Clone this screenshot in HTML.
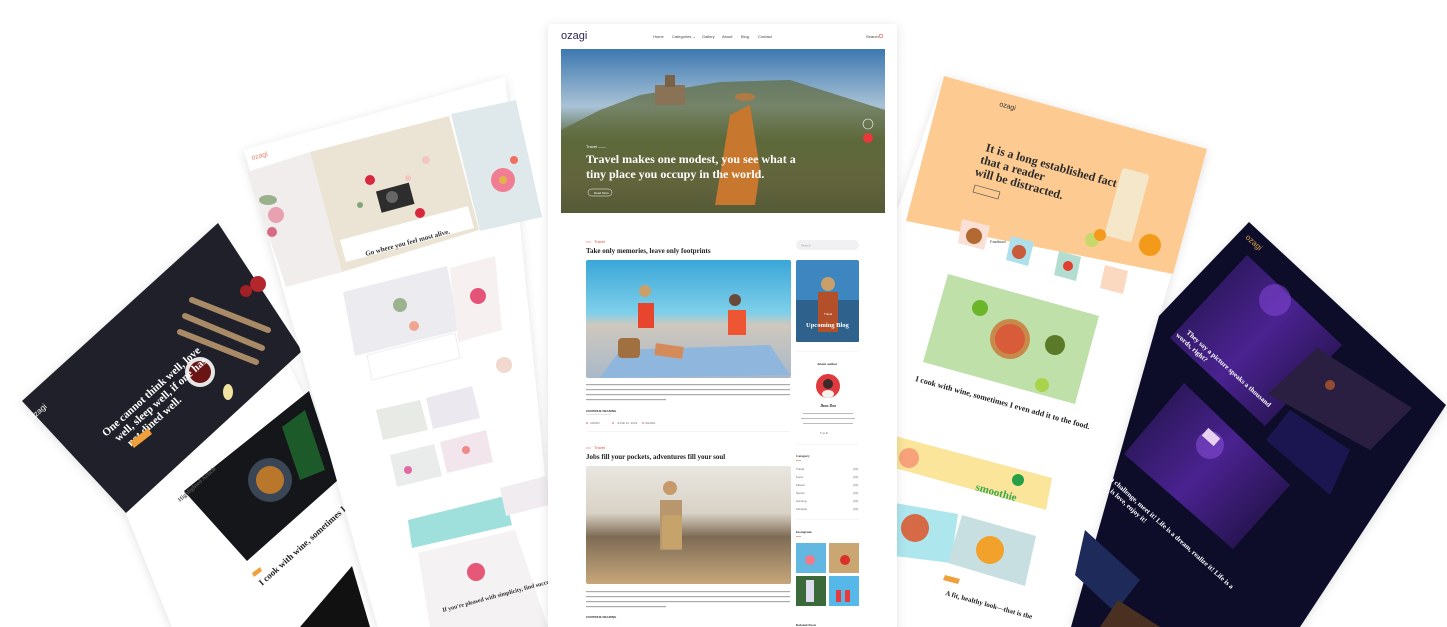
<!DOCTYPE html>
<html><head><meta charset="utf-8"><style>
html,body{margin:0;padding:0;background:#fff;width:1447px;height:627px;overflow:hidden}
svg{display:block}
.s{font-family:"Liberation Serif",serif;font-weight:bold}
.a{font-family:"Liberation Sans",sans-serif}
</style></head><body>
<svg width="1447" height="627" viewBox="0 0 1447 627" xmlns="http://www.w3.org/2000/svg">
<defs>
<filter id="sh" x="-10%" y="-10%" width="120%" height="120%"><feDropShadow dx="0" dy="2" stdDeviation="5" flood-color="#000" flood-opacity="0.12"/></filter>
<linearGradient id="hero" x1="0" y1="0" x2="0" y2="1"><stop offset="0" stop-color="#3d78b0"/><stop offset="0.35" stop-color="#a9c2d6"/><stop offset="0.55" stop-color="#5a6b3e"/><stop offset="0.8" stop-color="#6a5a40"/><stop offset="1" stop-color="#3b3630"/></linearGradient>
<linearGradient id="sea" x1="0" y1="0" x2="0" y2="1"><stop offset="0" stop-color="#3aa6d8"/><stop offset="0.45" stop-color="#7fd0ea"/><stop offset="0.55" stop-color="#cfc8bd"/><stop offset="1" stop-color="#a9b8c9"/></linearGradient>
<linearGradient id="dune" x1="0" y1="0" x2="0" y2="1"><stop offset="0" stop-color="#e9e6e1"/><stop offset="0.4" stop-color="#d9d2c6"/><stop offset="0.6" stop-color="#7e6b55"/><stop offset="1" stop-color="#c6a77a"/></linearGradient>
<linearGradient id="pur" x1="0" y1="0" x2="1" y2="1"><stop offset="0" stop-color="#1c1240"/><stop offset="0.5" stop-color="#4a2290"/><stop offset="1" stop-color="#160e34"/></linearGradient>
</defs>

<!-- LEFT dark food page -->
<g filter="url(#sh)">
<polygon points="22,401 218,223 420,627 172,627 126,513" fill="#fff"/>
</g>
<polygon points="22,401 218,223 302,351 126,513" fill="#1f2029"/>
<circle cx="258" cy="284" r="8" fill="#b3262b"/><circle cx="246" cy="291" r="6" fill="#a02025"/>
<g stroke="#a88a66" stroke-width="6" stroke-linecap="round"><line x1="192" y1="300" x2="268" y2="330"/><line x1="185" y1="316" x2="262" y2="348"/><line x1="180" y1="332" x2="256" y2="362"/></g>
<circle cx="200" cy="372" r="15" fill="#e6e6e6"/><circle cx="200" cy="372" r="11" fill="#6a1414"/>
<ellipse cx="228" cy="392" rx="5" ry="8" fill="#f0e2a0"/>
<g transform="translate(106,437) rotate(-42)"><text class="s" font-size="11" fill="#fff" x="0" y="0">One cannot think well, love</text><text class="s" font-size="11" fill="#fff" x="6" y="12">well, sleep well, if one has</text><text class="s" font-size="11" fill="#fff" x="12" y="24">not dined well.</text></g>
<polygon points="130,442 148,428 152,434 134,448" fill="#f0a03a"/>
<text class="a" x="33" y="420" font-size="8" fill="#fff" transform="rotate(-42 33 420)">ozagi</text>
<polygon points="184,491 309,391 338,480 247,561" fill="#14161a"/>
<circle cx="270" cy="480" r="22" fill="#3a4655"/><circle cx="270" cy="480" r="14" fill="#b9772c"/>
<polygon points="282,427 305,410 325,470 300,480" fill="#1d5a2a"/>
<text class="s" x="180" y="502" font-size="6" fill="#555" font-weight="normal" transform="rotate(-42 180 502)">Highlighted Article</text>
<text class="s" x="262" y="586" font-size="9" fill="#222" font-weight="normal" transform="rotate(-42 262 586)">I cook with wine, sometimes I even add</text>
<polygon points="252,573 260,567 262,571 254,577" fill="#f0a03a"/>
<polygon points="300,627 352,566 370,627" fill="#111"/>

<!-- FLOWER page -->
<g filter="url(#sh)"><polygon points="244,150 505,77 560,627 378,627" fill="#fff"/></g>
<polygon points="247,172 310,152 342,272 286,287" fill="#f1eded"/>
<circle cx="276" cy="215" r="8" fill="#e8a1b0"/><circle cx="272" cy="232" r="5" fill="#d86a86"/><ellipse cx="268" cy="200" rx="9" ry="5" fill="#9bb08c"/>
<polygon points="310,152 449,116 479,230 342,272" fill="#ebe3d3"/>
<rect x="378" y="187" width="34" height="22" fill="#2d2d2d" transform="rotate(-15 394 197)"/><circle cx="392" cy="197" r="6" fill="#666"/>
<circle cx="370" cy="180" r="5" fill="#d8283f"/><circle cx="420" cy="213" r="5" fill="#d8283f"/><circle cx="426" cy="160" r="4" fill="#f0c7c0"/><circle cx="408" cy="178" r="3" fill="#f0c7c0"/><circle cx="360" cy="205" r="3" fill="#82a67a"/>
<polygon points="340,240 468,206 474,228 346,262" fill="#fff"/>
<text class="s" x="366" y="256" font-size="7" fill="#333" font-weight="normal" transform="rotate(-15 366 256)">Go where you feel most alive.</text>
<polygon points="451,114 516,100 542,217 480,231" fill="#dfe9ec"/>
<circle cx="503" cy="180" r="12" fill="#f07d93"/><circle cx="503" cy="180" r="4" fill="#e3b24a"/><circle cx="514" cy="160" r="4" fill="#f07060"/>
<text class="a" x="252" y="160" font-size="7" fill="#e58a6c" transform="rotate(-15 252 160)">ozagi</text>
<polygon points="343,292 447,266 460,330 355,356" fill="#ecebf0"/>
<circle cx="400" cy="305" r="7" fill="#9bb48f"/><circle cx="414" cy="326" r="5" fill="#f0a590"/>
<polygon points="367,355 455,333 460,358 372,380" fill="#fff" stroke="#eee"/>
<polygon points="450,268 495,256 502,330 458,342" fill="#f6f0f0"/>
<circle cx="478" cy="296" r="8" fill="#e35478"/>
<circle cx="504" cy="365" r="8" fill="#f3d8d0"/>
<polygon points="376,410 420,400 428,430 383,440" fill="#e8eae6"/>
<polygon points="426,398 472,386 480,418 433,429" fill="#ebe8f0"/>
<polygon points="390,455 434,444 442,476 397,487" fill="#e9ecea"/>
<circle cx="408" cy="470" r="4" fill="#e06ba0"/>
<polygon points="440,442 486,430 493,462 447,473" fill="#f2e6ec"/>
<circle cx="466" cy="450" r="4" fill="#ef8a8a"/>
<polygon points="408,520 505,496 512,525 412,548" fill="#9fe0dd"/>
<polygon points="500,488 546,476 552,504 506,516" fill="#f0ecf0"/>
<polygon points="418,553 515,530 548,627 430,627" fill="#f4f2f2"/>
<circle cx="476" cy="572" r="9" fill="#e55878"/>
<text class="s" x="443" y="612" font-size="6" fill="#333" font-weight="normal" transform="rotate(-15 443 612)">If you're pleased with simplicity, find success</text>

<!-- ORANGE page -->
<g filter="url(#sh)"><polygon points="944,76 1207,149 1071,627 880,627 880,260" fill="#fff"/></g>
<polygon points="944,76 1207,149 1173,274 906,221" fill="#fdcb92"/>
<text class="a" x="999" y="106" font-size="7" fill="#333" transform="rotate(15.5 999 106)">ozagi</text>
<g transform="translate(985,151) rotate(15.5)"><text class="s" font-size="12" fill="#2b2b2b" x="0" y="0">It is a long established fact</text><text class="s" font-size="12" fill="#2b2b2b" x="-2" y="13">that a reader</text><text class="s" font-size="12" fill="#2b2b2b" x="-4" y="26">will be distracted.</text></g>
<polygon points="975,185 1000,192 998,199 973,192" fill="none" stroke="#444" stroke-width="0.6"/>
<rect x="1113" y="170" width="28" height="70" rx="3" fill="#f3ead0" opacity="0.9" transform="rotate(15 1127 205)"/>
<circle cx="1150" cy="245" r="11" fill="#f49a1a"/><circle cx="1092" cy="240" r="7" fill="#c8d86a"/><circle cx="1100" cy="235" r="6" fill="#f49a1a"/>
<polygon points="962,219 990,226 984,250 958,243" fill="#fbe0d6"/><circle cx="974" cy="236" r="8" fill="#b36a32"/>
<polygon points="1011,236 1034,242 1028,266 1006,260" fill="#aee0ec"/><circle cx="1019" cy="252" r="7" fill="#c95a3a"/>
<polygon points="1059,251 1081,257 1076,281 1054,275" fill="#b3ddd0"/><circle cx="1068" cy="266" r="5" fill="#e0402f"/>
<polygon points="1105,265 1128,271 1123,294 1100,288" fill="#fbd8c0"/>
<text class="a" x="990" y="243" font-size="4" fill="#333">Fastfood</text>
<polygon points="948,274 1099,316 1075,404 923,362" fill="#bfe0a8"/>
<circle cx="1010" cy="339" r="20" fill="#c88a4a"/><circle cx="1010" cy="339" r="15" fill="#d95c3a"/><circle cx="980" cy="308" r="8" fill="#6bb52a"/><circle cx="1055" cy="345" r="10" fill="#5a7a2a"/><circle cx="1042" cy="385" r="7" fill="#a8d34a"/>
<text class="s" x="915" y="381" font-size="8" fill="#222" font-weight="normal" transform="rotate(15.5 915 381)">I cook with wine, sometimes I even add it to the food.</text>
<polygon points="895,436 1052,478 1046,510 895,468" fill="#fbe59a"/>
<circle cx="909" cy="458" r="10" fill="#f7a27a"/><circle cx="1018" cy="480" r="6" fill="#25a046"/>
<text class="s" x="975" y="490" font-size="11" fill="#39a84a" transform="rotate(15.5 975 490)">smoothie</text>
<polygon points="895,503 958,514 951,563 895,556" fill="#aee6ee"/><circle cx="915" cy="528" r="14" fill="#d76a46"/>
<polygon points="962,515 1036,536 1025,586 948,563" fill="#c7dfe0"/><circle cx="990" cy="550" r="14" fill="#f2a22a"/>
<polygon points="945,575 960,579 958,584 943,580" fill="#f0a03a"/>
<text class="s" x="945" y="595" font-size="7" fill="#222" font-weight="normal" transform="rotate(15.5 945 595)">A fit, healthy look—that is the</text>

<!-- DARK purple page -->
<g filter="url(#sh)"><polygon points="1249,222 1446,405 1300,627 1071,627 1159,316" fill="#0d0a2c"/></g>
<text class="a" x="1245" y="238" font-size="8" fill="#e2a64a" transform="rotate(42 1245 238)">ozagi</text>
<polygon points="1247,255 1342,345 1265,426 1170,338" fill="url(#pur)"/>
<circle cx="1275" cy="300" r="16" fill="#8a4ae0" opacity="0.5"/>
<polygon points="1317,348 1412,408 1370,450 1268,394" fill="#2a1f40"/>
<circle cx="1330" cy="385" r="5" fill="#c0602a" opacity="0.7"/>
<polygon points="1290,410 1350,450 1330,495 1266,440" fill="#1c1650"/>
<polygon points="1184,383 1290,485 1233,549 1124,454" fill="url(#pur)"/>
<circle cx="1210" cy="445" r="14" fill="#9a5af0" opacity="0.45"/>
<rect x="1203" y="432" width="16" height="10" fill="#e8d0f0" transform="rotate(42 1211 437)"/>
<g transform="translate(1186,333) rotate(42)"><text class="s" font-size="7" fill="#fff" x="0" y="0">They say a picture speaks a thousand</text><text class="s" font-size="7" fill="#fff" x="-6" y="9">words, right?</text></g>
<g transform="translate(1110,480) rotate(42)"><text class="s" font-size="7" fill="#fff" x="0" y="0">a challenge, meet it! Life is a dream, realize it! Life is a</text><text class="s" font-size="7" fill="#fff" x="-6" y="9">Life is love, enjoy it!</text></g>
<polygon points="1085,530 1140,580 1115,612 1075,575" fill="#1e2a5a"/>
<polygon points="1118,600 1160,627 1100,627" fill="#4a3020"/>

<!-- CENTER page -->
<g filter="url(#sh)"><rect x="548" y="24" width="349" height="610" fill="#fff"/></g>
<text class="a" x="561" y="39" font-size="11" fill="#2c2750">ozagi</text>
<g class="a" font-size="4" fill="#444"><text x="653" y="38">Home</text><text x="672" y="38">Categories ⌄</text><text x="702" y="38">Gallery</text><text x="722" y="38">About</text><text x="741" y="38">Blog</text><text x="758" y="38">Contact</text><text x="866" y="38">Search</text></g>
<circle cx="881" cy="36" r="1.8" fill="none" stroke="#e74c3c" stroke-width="0.6"/>
<rect x="561" y="49" width="324" height="164" fill="url(#hero)"/>
<polygon points="561,130 600,110 640,95 720,82 790,80 885,110 885,213 561,213" fill="#5f6a3a" opacity="0.7"/>
<rect x="655" y="85" width="30" height="20" fill="#8a7256"/><rect x="665" y="75" width="10" height="12" fill="#7a6246"/>
<polygon points="730,115 750,105 760,170 755,205 715,205" fill="#c8772e"/>
<ellipse cx="745" cy="97" rx="10" ry="4" fill="#b07a45"/>
<text class="a" x="586" y="148" font-size="4" fill="#fff">Travel ——</text>
<text class="s" x="586" y="163" font-size="12" fill="#fff">Travel makes one modest, you see what a</text>
<text class="s" x="586" y="178" font-size="12" fill="#fff">tiny place you occupy in the world.</text>
<rect x="588" y="189" width="24" height="7" rx="3.5" fill="none" stroke="#fff" stroke-width="0.5"/>
<text class="a" x="594" y="194" font-size="3" fill="#fff">Read More</text>
<circle cx="868" cy="124" r="5" fill="none" stroke="#fff" stroke-width="0.6"/>
<circle cx="868" cy="138" r="5" fill="#e8383a"/>
<line x1="586" y1="242" x2="591" y2="242" stroke="#e74c3c" stroke-width="0.5"/><text class="a" x="594" y="243" font-size="4" fill="#e74c3c">Travel</text>
<text class="s" x="586" y="253" font-size="7" fill="#222">Take only memories, leave only footprints</text>
<rect x="586" y="260" width="205" height="118" rx="2" fill="url(#sea)"/>
<polygon points="620,350 770,345 790,375 600,378" fill="#8fb6dc"/>
<circle cx="645" cy="291" r="6" fill="#c9a06a"/><rect x="638" y="303" width="16" height="25" fill="#e8452e"/>
<circle cx="735" cy="300" r="6" fill="#6a4a3a"/><rect x="728" y="310" width="18" height="25" fill="#ee5533"/>
<rect x="655" y="345" width="28" height="12" fill="#d58a5a" transform="rotate(8 669 351)"/>
<rect x="618" y="338" width="22" height="20" rx="4" fill="#a07040"/>
<g fill="#aaa"><rect x="586" y="384" width="204" height="1.2"/><rect x="586" y="389" width="204" height="1.2"/><rect x="586" y="394" width="204" height="1.2"/><rect x="586" y="399" width="80" height="1.2"/></g>
<text class="a" x="586" y="412" font-size="3" fill="#333" font-weight="bold">CONTINUE READING</text>
<rect x="586" y="414" width="25" height="0.5" fill="#ccc"/>
<g class="a" font-size="3" fill="#777"><text x="590" y="424">ADMIN</text><text x="617" y="424">JUNE 10, 2022</text><text x="645" y="424">SHARE</text></g>
<circle cx="587" cy="423" r="0.8" fill="#e74c3c"/><circle cx="613" cy="423" r="0.8" fill="#e74c3c"/><circle cx="643" cy="423" r="0.8" fill="#e74c3c"/>
<rect x="586" y="431" width="204" height="0.5" fill="#e8e8e8"/>
<line x1="586" y1="448" x2="591" y2="448" stroke="#e74c3c" stroke-width="0.5"/><text class="a" x="594" y="449" font-size="4" fill="#e74c3c">Travel</text>
<text class="s" x="586" y="459" font-size="7" fill="#222">Jobs fill your pockets, adventures fill your soul</text>
<rect x="586" y="466" width="205" height="118" rx="2" fill="url(#dune)"/>
<circle cx="670" cy="488" r="7" fill="#c69a6a"/><rect x="660" y="500" width="22" height="50" fill="#b9976e"/><rect x="662" y="515" width="20" height="34" rx="3" fill="#c7a36c"/>
<g fill="#aaa"><rect x="586" y="591" width="204" height="1.2"/><rect x="586" y="596" width="204" height="1.2"/><rect x="586" y="601" width="204" height="1.2"/><rect x="586" y="606" width="80" height="1.2"/></g>
<text class="a" x="586" y="618" font-size="3" fill="#333" font-weight="bold">CONTINUE READING</text>
<rect x="796" y="240" width="63" height="10" rx="5" fill="#f1f1f3"/>
<text class="a" x="801" y="246.5" font-size="3" fill="#999">Search</text>
<rect x="796" y="260" width="63" height="82" rx="2" fill="#3d86c0"/>
<rect x="796" y="300" width="63" height="42" fill="#27496b" opacity="0.6"/>
<circle cx="828" cy="284" r="7" fill="#c9a06a"/><rect x="818" y="292" width="20" height="40" fill="#b3502a"/>
<text class="a" x="824" y="315" font-size="3" fill="#fff">Travel</text>
<text class="s" x="806" y="327" font-size="6.5" fill="#fff">Upcoming Blog</text>
<rect x="796" y="351" width="63" height="0.5" fill="#eee"/>
<text class="s" x="817" y="365" font-size="3.5" fill="#333">About author</text>
<circle cx="828" cy="386" r="12" fill="#e03a3e"/><circle cx="828" cy="384" r="5" fill="#3a2a2a"/><ellipse cx="828" cy="394" rx="6" ry="4" fill="#f4f0ee"/>
<text class="s" x="820" y="407" font-size="4" fill="#333">Jhon Doe</text>
<g fill="#bbb"><rect x="803" y="413" width="50" height="1"/><rect x="801" y="418" width="54" height="1"/><rect x="803" y="423" width="50" height="1"/></g>
<text class="a" x="820" y="434" font-size="3" fill="#555">f  t  p  in</text>
<rect x="796" y="444" width="63" height="0.5" fill="#eee"/>
<text class="s" x="796" y="457" font-size="3.5" fill="#333">Category</text>
<rect x="796" y="460" width="5" height="0.5" fill="#e74c3c"/>
<g class="a" font-size="3" fill="#666"><text x="796" y="470">Travel</text><text x="796" y="478">Food</text><text x="796" y="486">Flower</text><text x="796" y="494">Sports</text><text x="796" y="502">Gaming</text><text x="796" y="510">Lifestyle</text>
<text x="853" y="470">(10)</text><text x="853" y="478">(10)</text><text x="853" y="486">(10)</text><text x="853" y="494">(10)</text><text x="853" y="502">(10)</text><text x="853" y="510">(10)</text></g>
<rect x="796" y="519" width="63" height="0.5" fill="#eee"/>
<text class="s" x="796" y="533" font-size="3.5" fill="#333">Instagram</text>
<rect x="796" y="536" width="5" height="0.5" fill="#e74c3c"/>
<rect x="796" y="543" width="30" height="30" fill="#62b8e0"/><circle cx="810" cy="560" r="5" fill="#ef7a8a"/>
<rect x="829" y="543" width="30" height="30" fill="#c9a672"/><circle cx="845" cy="560" r="5" fill="#d8302a"/>
<rect x="796" y="576" width="30" height="30" fill="#3b6a3a"/><rect x="806" y="580" width="8" height="22" fill="#dde"/>
<rect x="829" y="576" width="30" height="30" fill="#55b8e8"/><rect x="836" y="590" width="5" height="12" fill="#e83a3a"/><rect x="845" y="590" width="5" height="12" fill="#e83a3a"/>
<text class="s" x="796" y="626" font-size="3.5" fill="#333">Related Posts</text>
</svg>
</body></html>
